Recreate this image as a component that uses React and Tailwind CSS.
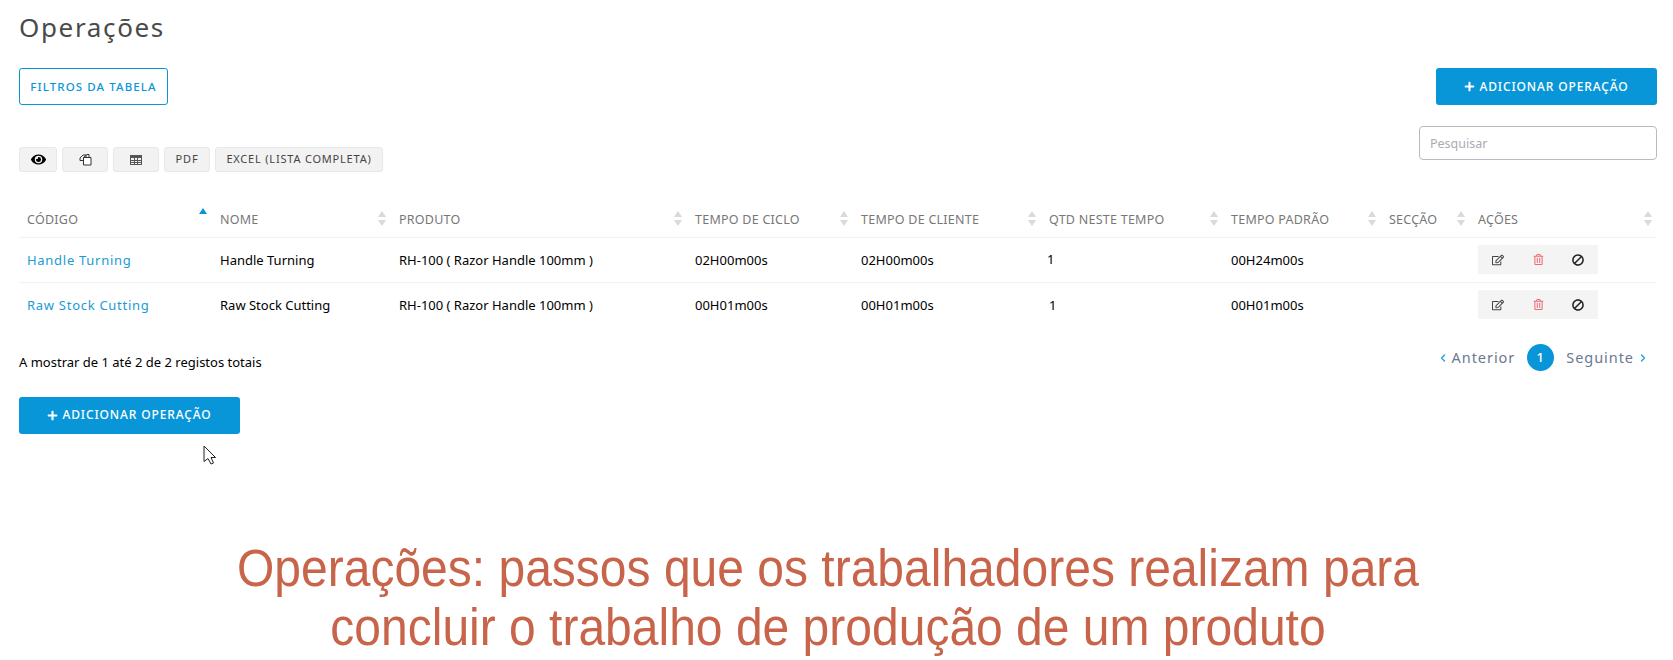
import React from "react";
import { FaEye, FaPlus, FaRegEdit, FaRegTrashAlt, FaBan } from "react-icons/fa";
import { ChevronLeft, ChevronRight } from "lucide-react";

const font = { fontFamily: '"Noto Sans", sans-serif' };

function Sort({ active }) {
  return (
    <svg width="10" height="16" viewBox="0 0 10 16" className="shrink-0">
      <path d="M5 0 L9 6 L1 6 Z" fill={active ? "#0996d8" : "#dadada"} />
      {!active && <path d="M5 15 L9 9 L1 9 Z" fill="#dadada" />}
    </svg>
  );
}

function CopyIcon() {
  return (
    <svg width="13" height="13" viewBox="0 0 13 13" fill="none" stroke="#333" strokeWidth="1">
      <path d="M1 7.5 L1 5 L4 2 L7 2 L7 4" />
      <path d="M1 7.5 L4 7.5" />
      <path d="M4.5 4.5 L8 1.5 L10 1.5 L10 4.5" />
      <path d="M4.5 4.5 L12 4.5 L12 12 L4.5 12 Z" fill="#fff" />
    </svg>
  );
}

function TableIcon() {
  return (
    <svg width="12" height="10" viewBox="0 0 12 10" fill="none" stroke="#555" strokeWidth="1" shapeRendering="crispEdges">
      <rect x="0.5" y="0.5" width="11" height="9" />
      <path d="M0.5 1.5 H11.5 M0.5 2.5 H11.5 M0.5 5.5 H11.5 M0.5 7.5 H11.5 M4.5 2 V9.5 M7.5 2 V9.5" />
    </svg>
  );
}

function AddButton() {
  return (
    <button className="flex h-[37px] w-[221px] items-center justify-center gap-[4px] rounded-[3px] bg-[#0996d8] text-[12px] font-medium tracking-[0.88px] text-white">
      <FaPlus className="text-[11px]" />
      ADICIONAR OPERAÇÃO
    </button>
  );
}

const cols = [
  { label: "CÓDIGO", w: 193, active: true },
  { label: "NOME", w: 179 },
  { label: "PRODUTO", w: 296 },
  { label: "TEMPO DE CICLO", w: 166 },
  { label: "TEMPO DE CLIENTE", w: 188 },
  { label: "QTD NESTE TEMPO", w: 182 },
  { label: "TEMPO PADRÃO", w: 158 },
  { label: "SECÇÃO", w: 89 },
  { label: "AÇÕES", w: 187 },
];

const rows = [
  ["Handle Turning", "Handle Turning", "RH-100 ( Razor Handle 100mm )", "02H00m00s", "02H00m00s", "1", "00H24m00s"],
  ["Raw Stock Cutting", "Raw Stock Cutting", "RH-100 ( Razor Handle 100mm )", "00H01m00s", "00H01m00s", "1", "00H01m00s"],
];

function ToolButton({ children, className }) {
  return (
    <button className={"flex h-[25px] items-center justify-center rounded-[3px] border border-[#e8e8e8] bg-[#f2f2f2] text-[11px] tracking-[0.8px] text-[#444] " + className}>
      {children}
    </button>
  );
}

export default function App() {
  return (
    <div style={font} className="h-[660px] w-[1673px] overflow-hidden bg-white pl-[19px] pr-[16px] text-black">
      <h1 className="h-[68px] pt-[8px] text-[26px] leading-[38px] tracking-[1.65px] text-[#4a4a4a]">Operações</h1>

      <div className="flex items-start justify-between">
        <button className="flex h-[37px] w-[149px] items-center justify-center rounded-[3px] border border-[#0996d8] bg-white text-[11.5px] font-medium tracking-[1.1px] text-[#0996d8]">
          FILTROS DA TABELA
        </button>
        <AddButton />
      </div>

      <div className="flex items-start justify-between pt-[21px]">
        <div className="flex gap-[5px] pt-[21px]">
          <ToolButton className="w-[38px]"><FaEye className="text-[15px] text-black" /></ToolButton>
          <ToolButton className="w-[46px]"><CopyIcon /></ToolButton>
          <ToolButton className="w-[46px]"><TableIcon /></ToolButton>
          <ToolButton className="w-[46px]">PDF</ToolButton>
          <ToolButton className="w-[168px]">EXCEL (LISTA COMPLETA)</ToolButton>
        </div>
        <input
          readOnly
          placeholder="Pesquisar"
          className="h-[34px] w-[238px] rounded-[4px] border border-[#b9bbc2] px-[10px] text-[12.5px] placeholder:text-[#a9abb3]"
        />
      </div>

      <table className="mt-[29px] w-[1638px] table-fixed border-collapse">
        <colgroup>
          {cols.map((c) => <col key={c.label} style={{ width: c.w }} />)}
        </colgroup>
        <thead>
          <tr className="border-b border-[#f2f2f2]">
            {cols.map((c) => (
              <th key={c.label} className="h-[36px] px-[8px] pb-0 pt-[3px] text-left font-normal">
                <div className="flex items-center justify-between text-[12.5px] tracking-[0.25px] text-[#777]">
                  <span>{c.label}</span>
                  <span className={c.active ? "-mr-[4px] -translate-y-[4px]" : "-mr-[4px] -translate-y-[1px]"}><Sort active={c.active} /></span>
                </div>
              </th>
            ))}
          </tr>
        </thead>
        <tbody>
          {rows.map((r, i) => (
            <tr key={r[0]} className={i === 0 ? "h-[45px] border-b border-[#f2f2f2]" : "h-[45px]"}>
              <td className="px-[8px] pt-[2px] text-[13px] tracking-[0.72px] text-[#1a9ad6]">{r[0]}</td>
              <td className="px-[8px] pt-[2px] text-[13px] text-black">{r[1]}</td>
              <td className="px-[8px] pt-[2px] text-[13px] text-black">{r[2]}</td>
              <td className="px-[8px] pt-[2px] text-[13px] text-black">{r[3]}</td>
              <td className="px-[8px] pt-[2px] text-[13px] text-black">{r[4]}</td>
              <td className="px-[8px] pt-[2px] text-[13px] text-black">
                <span className={i === 0 ? "-ml-[2px] block -translate-y-[1px]" : "block"}>{r[5]}</span>
              </td>
              <td className="px-[8px] pt-[2px] text-[13px] text-black">{r[6]}</td>
              <td className="px-[8px]"></td>
              <td className="px-[8px]">
                <div className="grid h-[29px] w-[120px] grid-cols-3 items-center justify-items-center bg-[#f4f4f4] text-[12px]">
                  <FaRegEdit className="text-[#444]" />
                  <FaRegTrashAlt className="text-[11px] text-[#ee6b70]" />
                  <FaBan className="-scale-x-100 text-[12px] text-[#222]" />
                </div>
              </td>
            </tr>
          ))}
        </tbody>
      </table>

      <div className="flex items-center justify-between pt-[16px]">
        <span className="pt-[10px] text-[13px] text-black">A mostrar de 1 até 2 de 2 registos totais</span>
        <div className="flex items-center pr-[8px] text-[14.5px] tracking-[0.95px] text-[#6b7a90]">
          <ChevronLeft size={12} strokeWidth={2.5} className="mr-[3px] text-[#1a9ad6]" />
          <span>Anterior</span>
          <span className="mx-[12px] flex h-[27px] w-[27px] items-center justify-center rounded-full bg-[#0996d8] text-[13px] font-medium text-white">1</span>
          <span>Seguinte</span>
          <ChevronRight size={12} strokeWidth={2.5} className="ml-[3px] text-[#1a9ad6]" />
        </div>
      </div>

      <div className="pt-[24px]">
        <AddButton />
      </div>

      <div className="relative">
        <svg width="14" height="20" viewBox="0 0 14 20" className="absolute left-[184px] top-[11px]">
          <path d="M1 1 L1 16.5 L5 13.5 L8 19 L10.5 18 L8 12.5 L12.5 12.5 Z" fill="#fff" stroke="#222" strokeWidth="1" />
        </svg>
      </div>

      <div
        className="origin-top scale-y-[1.08] pr-[20px] pt-[98px] text-center text-[48px] leading-[54px] text-[#c8644a]"
        style={{ fontFamily: '"Liberation Sans", Arial, sans-serif' }}
      >
        Operações: passos que os trabalhadores realizam para
        <br />
        concluir o trabalho de produção de um produto
      </div>
    </div>
  );
}
